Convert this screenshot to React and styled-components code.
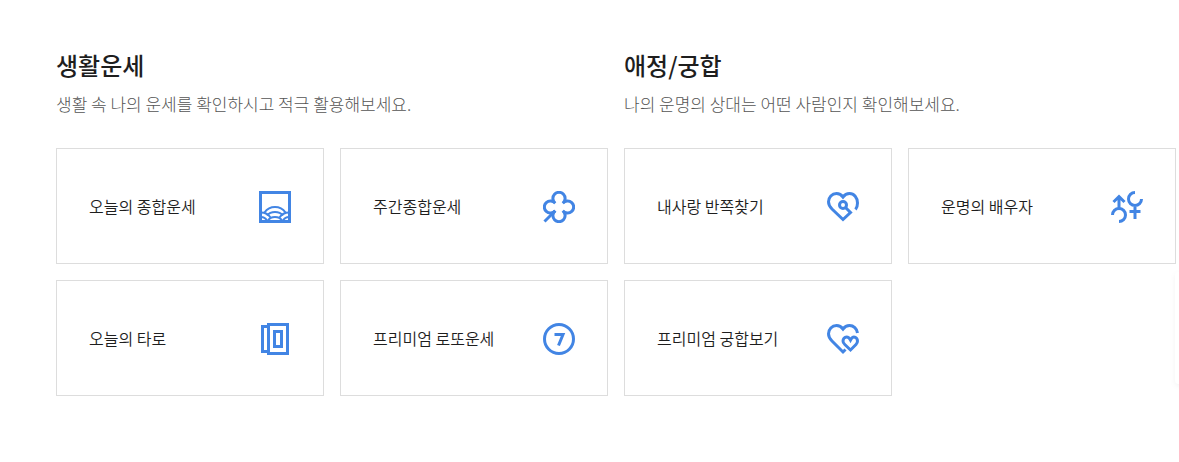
import React from 'react'
import styled, { createGlobalStyle } from 'styled-components'

const GlobalStyle = createGlobalStyle`
  * {
    box-sizing: border-box;
  }

  body {
    margin: 0;
    background: #fff;
    color: #1e1e1e;
    font-family: 'Noto Sans CJK KR', 'Noto Sans', sans-serif;
  }
`

const Page = styled.main`
  display: grid;
  grid-template-columns: repeat(2, minmax(0, 1fr));
  gap: 16px;
  padding: 47px 3px 66px 56px;
`

const Title = styled.h2`
  margin: 0;
  font-size: 24px;
  font-weight: 500;
  line-height: 36px;
`

const Description = styled.p`
  margin: 9px 0 32px;
  color: #555;
  font-size: 17px;
  font-weight: 300;
  line-height: 24px;
`

const CardList = styled.ul`
  display: grid;
  grid-template-columns: repeat(2, minmax(0, 1fr));
  gap: 16px;
  margin: 0;
  padding: 0;
  list-style: none;
`

const Card = styled.a`
  display: flex;
  align-items: center;
  justify-content: space-between;
  padding: 40px 32px;
  border: 1px solid #ddd;
  color: #1e1e1e;
  font-size: 16px;
  font-weight: 350;
  line-height: 24px;
  text-decoration: none;
`

const Icon = styled.svg.attrs({ viewBox: '0 0 32 32', 'aria-hidden': true })`
  flex: none;
  width: 32px;
  height: 32px;
  margin-top: 2px;
  fill: none;
  stroke: #4285e4;
  stroke-width: 3;
`

const SidePanel = styled.aside`
  position: fixed;
  top: 272px;
  left: calc(100% - 4px);
  width: 80px;
  height: 112px;
  border-radius: 4px;
  background: #fff;
  box-shadow: 0 2px 6px rgba(0, 0, 0, 0.05);
`

const WaveIcon = () => (
  <Icon>
    <rect x="1.5" y="1.5" width="29" height="29" />
    <g strokeWidth="2">
      <path d="M5.5 21.5C8 18 11.5 16 16 16s8 2 10.5 5.5" />
      <path d="M8 24.5c2-2.5 4.5-3.5 8-3.5s6 1 8 3.5" />
      <path d="M9 29.5c1.5-2.5 4-3.5 7-3.5s5.5 1 7 3.5" />
      <path d="M2 21.5c4 0 7.5 2 9.5 5M30 21.5c-4 0-7.5 2-9.5 5" />
      <path d="M2 26c2.5 0 4.5 1 6 3.5M30 26c-2.5 0-4.5 1-6 3.5" />
    </g>
  </Icon>
)

const CloverIcon = () => (
  <Icon>
    <path d="M12.2 12.2A6.1 6.1 0 1 1 19.8 12.2A6.1 6.1 0 1 1 19.8 19.8A6.1 6.1 0 1 1 12.2 19.8A6.1 6.1 0 1 1 12.2 12.2Z" />
    <path d="M12.2 19.8L1.5 30.5" />
  </Icon>
)

const HeartKeyIcon = () => (
  <Icon>
    <path d="M28.5 18.5C30 16.8 30.5 14.5 30.5 12C30.5 6.5 27 2.5 22.5 2.5C20 2.5 17.8 3.5 16 6C14.2 3.5 12 2.5 9.5 2.5C5 2.5 1.5 6.2 1.5 10.8C1.5 14 3 16 5 18L16 28.5L23.5 21.5L18.5 16.5" />
    <circle cx="16" cy="14" r="3.5" />
  </Icon>
)

const GenderIcon = () => (
  <Icon>
    <path d="M1.5 24A6.5 6.5 0 1 1 8 30.5M8 17.5V5.5M2.5 11L8 5.5L13.5 11" />
    <path d="M24 1.5A6.5 6.5 0 1 0 30.5 8M24 14.5V28M18.5 20.5H29.5" />
  </Icon>
)

const CardsIcon = () => (
  <Icon>
    <path d="M8.5 3.5H3.5V28.5H8.5" />
    <rect x="9.5" y="1.5" width="19" height="29" />
    <rect x="15.5" y="8.5" width="7" height="15" />
  </Icon>
)

const SevenIcon = () => (
  <Icon>
    <circle cx="16" cy="16" r="14.5" />
    <path d="M11.5 11.5H20L15.5 22.5" />
  </Icon>
)

const HeartsIcon = () => (
  <Icon>
    <path d="M30.5 10C30 5.5 26.5 2.5 22.5 2.5C20 2.5 17.8 3.5 16 6C14.2 3.5 12 2.5 9.5 2.5C5 2.5 1.5 6.2 1.5 10.8C1.5 14 3 16 5 18L16 29L18.5 26.5" />
    <path d="M23.5 17C22.5 15 21 14 19.5 14C17.5 14 16 15.7 16 18C16 19.5 16.7 20.5 17.8 21.5L23.5 27L29 21.5C30 20.5 30.5 19.5 30.5 18C30.5 15.7 29 14 27 14C25.5 14 24.5 15 23.5 17Z" />
  </Icon>
)

const sections = [
  {
    id: 'life',
    title: '생활운세',
    description: '생활 속 나의 운세를 확인하시고 적극 활용해보세요.',
    items: [
      { label: '오늘의 종합운세', Symbol: WaveIcon },
      { label: '주간종합운세', Symbol: CloverIcon },
      { label: '오늘의 타로', Symbol: CardsIcon },
      { label: '프리미엄 로또운세', Symbol: SevenIcon },
    ],
  },
  {
    id: 'love',
    title: '애정/궁합',
    description: '나의 운명의 상대는 어떤 사람인지 확인해보세요.',
    items: [
      { label: '내사랑 반쪽찾기', Symbol: HeartKeyIcon },
      { label: '운명의 배우자', Symbol: GenderIcon },
      { label: '프리미엄 궁합보기', Symbol: HeartsIcon },
    ],
  },
]

export default () => {
  return (
    <>
      <GlobalStyle />
      <Page>
        {sections.map(({ id, title, description, items }) => (
          <section key={id} aria-labelledby={id}>
            <Title id={id}>{title}</Title>
            <Description>{description}</Description>
            <CardList>
              {items.map(({ label, Symbol }) => (
                <li key={label}>
                  <Card href="#">
                    {label}
                    <Symbol />
                  </Card>
                </li>
              ))}
            </CardList>
          </section>
        ))}
      </Page>
      <SidePanel />
    </>
  )
}
